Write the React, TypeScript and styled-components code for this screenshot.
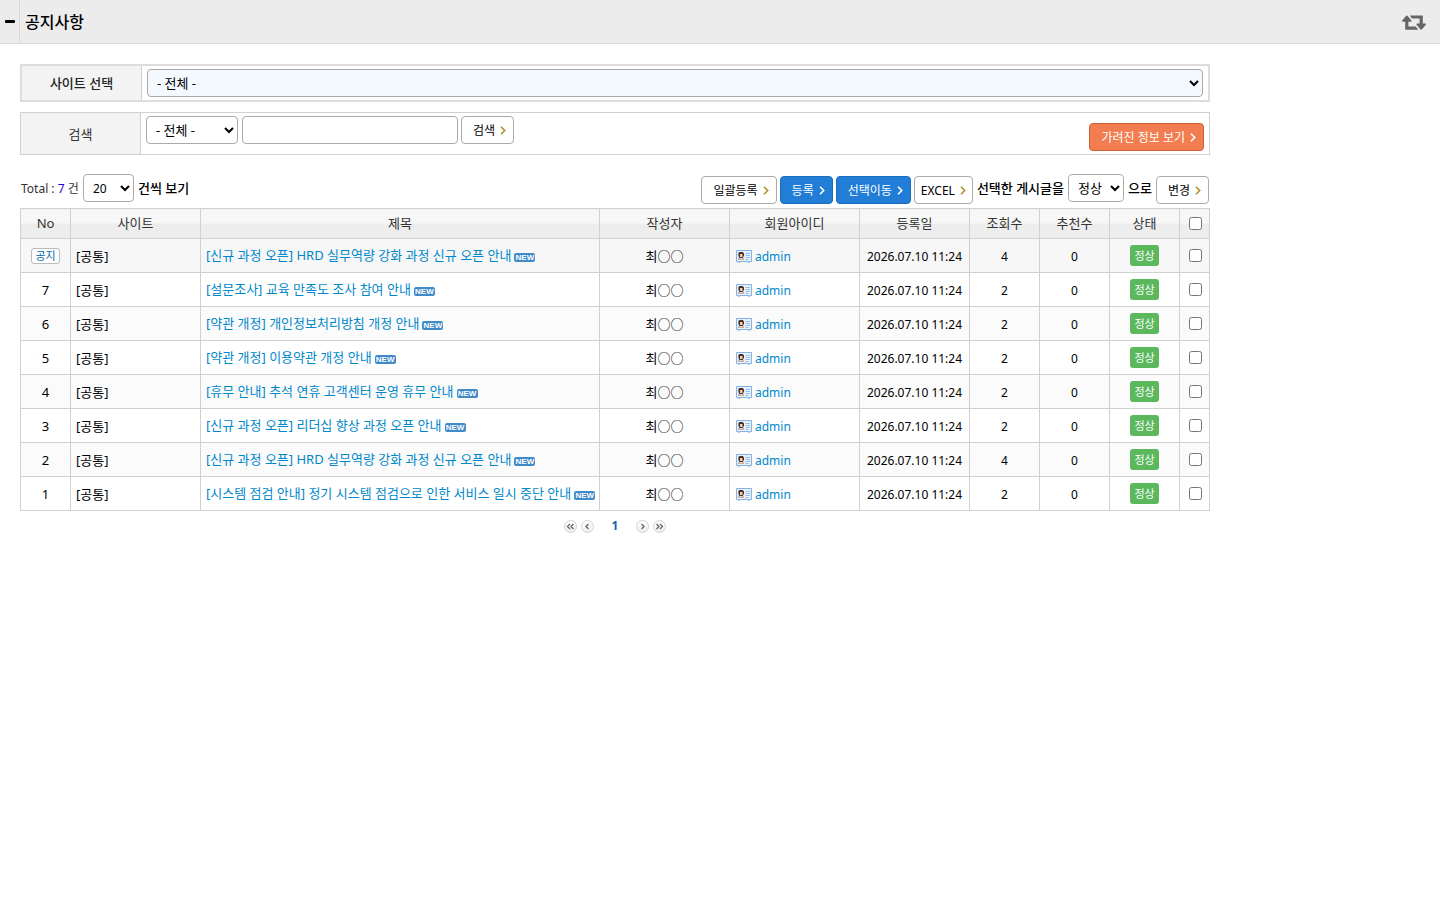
import React, { useState } from "react";
import styled, { createGlobalStyle, css } from "styled-components";

const GlobalStyle = createGlobalStyle`
  *, *::before, *::after { box-sizing: border-box; }
  body {
    margin: 0;
    background: #fff;
    color: #000;
    font-family: "Noto Sans", "Noto Sans CJK KR", sans-serif;
    font-size: 13px;
    line-height: 20px;
  }
  button, input, select { font: inherit; color: inherit; }
  a { color: #0088cc; text-decoration: none; }
`;

const TopBar = styled.header`
  display: flex;
  align-items: stretch;
  height: 44px;
  background: #ececec;
  border-bottom: 1px solid #d9d9d9;
`;

const FoldButton = styled.button`
  display: flex;
  align-items: center;
  justify-content: center;
  width: 20px;
  padding: 0;
  border: 0;
  border-right: 1px solid #d9d9d9;
  background: none;
  cursor: pointer;
`;

const PageTitle = styled.h1`
  flex: 1;
  margin: 0;
  padding-left: 5px;
  font-size: 16px;
  font-weight: 500;
  line-height: 44px;
`;

const RefreshButton = styled.button`
  display: flex;
  align-items: center;
  padding: 2px 14px 0;
  border: 0;
  background: none;
  cursor: pointer;
`;

const Content = styled.main`
  max-width: 1230px;
  padding: 20px;
`;

const FilterRow = styled.div<{ $strong?: boolean }>`
  display: flex;
  margin-bottom: ${(p) => (p.$strong ? 10 : 19)}px;
  border: ${(p) => (p.$strong ? "2px solid #dddddd" : "1px solid #d0d0d0")};
`;

const FilterLabel = styled.label<{ $strong?: boolean }>`
  display: flex;
  align-items: center;
  justify-content: center;
  flex: 0 0 120px;
  border-right: 1px solid #d0d0d0;
  background: #f3f3f3;
  color: ${(p) => (p.$strong ? "#222" : "#333")};
  font-weight: ${(p) => (p.$strong ? 500 : 400)};
`;

const FilterBody = styled.div`
  display: flex;
  flex: 1;
  gap: 4px;
  min-width: 0;
  padding: 3px 5px;
`;

const field = css`
  height: 28px;
  border: 1px solid #aaa;
  border-radius: 4px;
  background-color: #fff;
`;

const Select = styled.select<{ $fill?: boolean; $width?: number; $small?: boolean }>`
  ${field}
  padding: 0 0 0 5px;
  width: ${(p) => (p.$fill ? "100%" : `${p.$width}px`)};
  ${(p) => p.$fill && "background-color: #f4f8ff;"}
  ${(p) => p.$small && "font-size: 12px;"}
`;

const TextInput = styled.input`
  ${field}
  width: 216px;
  padding: 0 8px;
`;

const SearchBox = styled.div`
  display: flex;
  gap: 3px;
`;

type Tone = "plain" | "blue" | "orange";

const tones = {
  plain: { bg: "#ffffff", line: "#aaaaaa", text: "#000000", arrow: "#b0912b" },
  blue: { bg: "#217dd6", line: "#1a6cbc", text: "#ffffff", arrow: "#ffffff" },
  orange: { bg: "#f27d50", line: "#cc6238", text: "#ffffff", arrow: "#ffffff" },
};

const ActionButton = styled.button<{ $tone: Tone; $tight?: boolean }>`
  display: inline-flex;
  flex: none;
  align-items: center;
  gap: 5px;
  height: 28px;
  padding: ${(p) => (p.$tight ? "1px 6px 0" : "1px 7px 0 11px")};
  border: 1px solid ${(p) => tones[p.$tone].line};
  border-radius: 4px;
  background: ${(p) => tones[p.$tone].bg};
  color: ${(p) => tones[p.$tone].text};
  font-size: 12px;
  white-space: nowrap;
  cursor: pointer;
  svg { stroke: ${(p) => tones[p.$tone].arrow}; }
`;

const PushEnd = styled.div`
  display: flex;
  align-items: flex-end;
  height: 35px;
  margin-left: auto;
`;

const ListBar = styled.div`
  display: flex;
  align-items: center;
  justify-content: space-between;
  height: 30px;
  margin-bottom: 4px;
  padding: 0 1px;
`;

const BarGroup = styled.div<{ $gap: number }>`
  display: flex;
  align-items: flex-start;
  gap: ${(p) => p.$gap}px;
  height: 30px;
`;

const Total = styled.span`
  width: 58px;
  color: #333;
  font-size: 12px;
  line-height: 30px;
  white-space: nowrap;
  b { color: #1a00e0; font-weight: 400; }
`;

const BarText = styled.span`
  font-weight: 500;
  line-height: 29px;
  white-space: nowrap;
`;

const ButtonSet = styled.div`
  display: flex;
  gap: 3px;
  padding-top: 2px;
`;

const Board = styled.table`
  width: 100%;
  table-layout: fixed;
  border-collapse: collapse;
  th, td {
    border: 1px solid #d0d0d0;
    padding: 0 5px;
    text-align: center;
    vertical-align: middle;
    white-space: nowrap;
  }
  th {
    height: 30px;
    padding-bottom: 1px;
    background: linear-gradient(#f7f7f7 50%, #ededed 50%);
    color: #333;
    font-weight: 400;
  }
`;

const Row = styled.tr<{ $notice?: boolean }>`
  height: 34px;
  background: ${(p) => (p.$notice ? "#f7f7f7" : "#fff")};
  &:nth-child(2n + 3) { background: #fbfbfb; }
`;

const Cell = styled.td<{ $left?: boolean; $small?: boolean; $subject?: boolean }>`
  && {
    padding-top: ${(p) => (p.$small ? 2 : 0)}px;
    padding-bottom: ${(p) => (p.$subject ? 2 : 0)}px;
    text-align: ${(p) => (p.$left ? "left" : "center")};
  }
  font-size: ${(p) => (p.$small ? 12 : 13)}px;
`;

const NoticeTag = styled.span`
  display: block;
  width: 29px;
  margin: 0 auto;
  border: 1px solid #bbb;
  border-radius: 3px;
  background: #fff;
  color: #0a6aa8;
  font-size: 11px;
  line-height: 14px;
`;

const NewTag = styled.span`
  display: inline-block;
  width: 21px;
  margin-left: 3px;
  border-radius: 2px;
  background: #428bca;
  color: #fff;
  font: bold 8px/9px "Liberation Sans", sans-serif;
  text-align: center;
`;

const StateTag = styled.span`
  display: block;
  width: 29px;
  margin: 0 auto;
  border-radius: 3px;
  background: #5cb85c;
  color: #fff;
  font-size: 11px;
  line-height: 21px;
`;

const Member = styled.a`
  display: flex;
  align-items: center;
  gap: 3px;
  padding-left: 1px;
`;

const Check = styled.input`
  display: block;
  width: 13px;
  height: 13px;
  margin: 0 auto;
`;

const CheckHolder = styled.div`
  padding-left: 1px;
`;

const Pager = styled.nav`
  display: flex;
  align-items: center;
  justify-content: center;
  gap: 4px;
  margin-top: 5px;
  b {
    width: 34px;
    color: #1d5bb0;
    font-size: 12px;
    text-align: center;
  }
`;

const PageLink = styled.a`
  display: flex;
  align-items: center;
  justify-content: center;
  width: 13px;
  height: 13px;
  border: 1px solid #d4d4d4;
  border-radius: 50%;
  background: linear-gradient(#fff, #eee);
`;

const Arrow = () => (
  <svg width="6" height="9" viewBox="0 0 6 9" fill="none" strokeWidth="1.6" aria-hidden="true">
    <path d="M1 .8 4.700 4.500 1 8.200" />
  </svg>
);

const RetweetIcon = () => (
  <svg width="24" height="15" viewBox="0 96 1920 1200" fill="#666" aria-hidden="true">
    <path d="M1280 1248q0 13-9.5 22.5t-22.5 9.5h-960q-8 0-13.5-2t-9-7-5.5-8-3-11.5-1-11.5v-600h-192q-26 0-45-19t-19-45q0-24 15-41l320-384q19-22 49-22t49 22l320 384q15 17 15 41 0 26-19 45t-45 19h-192v384h576q16 0 25 11l160 192q7 10 7 21zm640-416q0 24-15 41l-320 384q-20 23-49 23t-49-23l-320-384q-15-17-15-41 0-26 19-45t45-19h192v-384h-576q-16 0-25-12l-160-192q-7-9-7-20 0-13 9.5-22.5t22.5-9.5h960q8 0 13.5 2t9 7 5.5 8 3 11.5 1 11.5v600h192q26 0 45 19t19 45z" />
  </svg>
);

const CardIcon = () => (
  <svg width="16" height="13" viewBox="0 0 16 13" aria-hidden="true">
    <path d="M.5.5h15v11h-2v1h-1v-1h-9v1h-1v-1h-2z" fill="#e6f1fd" stroke="#85b2e4" />
    <path d="M2 2h6v8H2z" fill="#b9d6f6" />
    <path d="M3.500 2h3L8 3.500v2L6.500 8h-3L2.500 5.500v-2z" fill="#4a2b18" />
    <path d="M4 4h2.500v3H4z" fill="#f8cfa4" />
    <path d="M2 8.500h1.500l1 1h1l1-1H8V10H2z" fill="#e9a06c" />
    <path d="M9.500 3.500h4.500M9.500 5.500h4.500M9.500 7.500h4.500M9.500 9.500h3" stroke="#9bbfe8" />
  </svg>
);

const chevrons: Record<string, string> = {
  first: "M4 1 1.500 3.500 4 6M7.500 1 5 3.500 7.500 6",
  prev: "M5.500 1 3 3.500 5.500 6",
  next: "M3.500 1 6 3.500 3.500 6",
  last: "M1.500 1 4 3.500 1.500 6M5 1 7.500 3.500 5 6",
};

const PageArrow = ({ kind, label }: { kind: string; label: string }) => (
  <PageLink href="#" aria-label={label}>
    <svg width="9" height="7" viewBox="0 0 9 7" fill="none" stroke="#666" strokeWidth="1.300" aria-hidden="true">
      <path d={chevrons[kind]} />
    </svg>
  </PageLink>
);

type ActionProps = { label: string; tone?: Tone; tight?: boolean };

const Action = ({ label, tone = "plain", tight }: ActionProps) => (
  <ActionButton type="button" $tone={tone} $tight={tight}>
    {label}
    <Arrow />
  </ActionButton>
);

const columns: [string, number | null][] = [
  ["No", 50],
  ["사이트", 130],
  ["제목", null],
  ["작성자", 130],
  ["회원아이디", 130],
  ["등록일", 110],
  ["조회수", 70],
  ["추천수", 70],
  ["상태", 70],
];

const posts = [
  { no: "공지", title: "[신규 과정 오픈] HRD 실무역량 강화 과정 신규 오픈 안내", views: 4 },
  { no: "7", title: "[설문조사] 교육 만족도 조사 참여 안내", views: 2 },
  { no: "6", title: "[약관 개정] 개인정보처리방침 개정 안내", views: 2 },
  { no: "5", title: "[약관 개정] 이용약관 개정 안내", views: 2 },
  { no: "4", title: "[휴무 안내] 추석 연휴 고객센터 운영 휴무 안내", views: 2 },
  { no: "3", title: "[신규 과정 오픈] 리더십 향상 과정 오픈 안내", views: 2 },
  { no: "2", title: "[신규 과정 오픈] HRD 실무역량 강화 과정 신규 오픈 안내", views: 4 },
  { no: "1", title: "[시스템 점검 안내] 정기 시스템 점검으로 인한 서비스 일시 중단 안내", views: 2 },
];

export default function App() {
  const [checked, setChecked] = useState<string[]>([]);
  const allChecked = checked.length === posts.length;
  const toggle = (no: string) =>
    setChecked((list) => (list.includes(no) ? list.filter((n) => n !== no) : [...list, no]));

  return (
    <>
      <GlobalStyle />
      <TopBar>
        <FoldButton type="button" aria-label="메뉴 접기">
          <svg width="10" height="3" viewBox="0 0 10 3" aria-hidden="true">
            <rect width="10" height="3" rx="1" />
          </svg>
        </FoldButton>
        <PageTitle>공지사항</PageTitle>
        <RefreshButton type="button" aria-label="새로고침">
          <RetweetIcon />
        </RefreshButton>
      </TopBar>

      <Content>
        <FilterRow $strong>
          <FilterLabel $strong htmlFor="site">사이트 선택</FilterLabel>
          <FilterBody>
            <Select $fill id="site">
              <option>- 전체 -</option>
            </Select>
          </FilterBody>
        </FilterRow>

        <FilterRow>
          <FilterLabel htmlFor="keyword">검색</FilterLabel>
          <FilterBody>
            <Select $width={92} aria-label="검색 구분">
              <option>- 전체 -</option>
            </Select>
            <SearchBox>
              <TextInput id="keyword" type="text" />
              <Action label="검색" />
            </SearchBox>
            <PushEnd>
              <Action label="가려진 정보 보기" tone="orange" />
            </PushEnd>
          </FilterBody>
        </FilterRow>

        <ListBar>
          <BarGroup $gap={4}>
            <Total>
              Total : <b>7</b> 건
            </Total>
            <Select $small $width={51} id="size">
              <option>20</option>
            </Select>
            <BarText as="label" htmlFor="size">건씩 보기</BarText>
          </BarGroup>
          <BarGroup $gap={4}>
            <ButtonSet>
              <Action label="일괄등록" />
              <Action label="등록" tone="blue" />
              <Action label="선택이동" tone="blue" />
              <Action label="EXCEL" tight />
            </ButtonSet>
            <BarText as="label" htmlFor="state">선택한 게시글을</BarText>
            <Select $width={56} id="state">
              <option>정상</option>
            </Select>
            <BarText>으로</BarText>
            <ButtonSet>
              <Action label="변경" />
            </ButtonSet>
          </BarGroup>
        </ListBar>

        <Board>
          <colgroup>
            {columns.map(([name, width]) => (
              <col key={name} width={width ?? undefined} />
            ))}
            <col width={30} />
          </colgroup>
          <thead>
            <tr>
              {columns.map(([name]) => (
                <th key={name} scope="col">{name}</th>
              ))}
              <th scope="col">
                <CheckHolder>
                  <Check
                    type="checkbox"
                    aria-label="전체 선택"
                    checked={allChecked}
                    onChange={() => setChecked(allChecked ? [] : posts.map((p) => p.no))}
                  />
                </CheckHolder>
              </th>
            </tr>
          </thead>
          <tbody>
            {posts.map((post) => (
              <Row key={post.no} $notice={post.no === "공지"}>
                <Cell>{post.no === "공지" ? <NoticeTag>{post.no}</NoticeTag> : post.no}</Cell>
                <Cell $left>[공통]</Cell>
                <Cell $left $subject>
                  <a href="#">{post.title}</a>
                  <NewTag>NEW</NewTag>
                </Cell>
                <Cell>최○○</Cell>
                <Cell $left $small>
                  <Member href="#">
                    <CardIcon />
                    admin
                  </Member>
                </Cell>
                <Cell $small>2026.07.10 11:24</Cell>
                <Cell $small>{post.views}</Cell>
                <Cell $small>0</Cell>
                <Cell>
                  <StateTag>정상</StateTag>
                </Cell>
                <Cell>
                  <CheckHolder>
                    <Check
                      type="checkbox"
                      aria-label={`${post.no} 선택`}
                      checked={checked.includes(post.no)}
                      onChange={() => toggle(post.no)}
                    />
                  </CheckHolder>
                </Cell>
              </Row>
            ))}
          </tbody>
        </Board>

        <Pager aria-label="페이지">
          <PageArrow kind="first" label="처음" />
          <PageArrow kind="prev" label="이전" />
          <b>1</b>
          <PageArrow kind="next" label="다음" />
          <PageArrow kind="last" label="마지막" />
        </Pager>
      </Content>
    </>
  );
}
